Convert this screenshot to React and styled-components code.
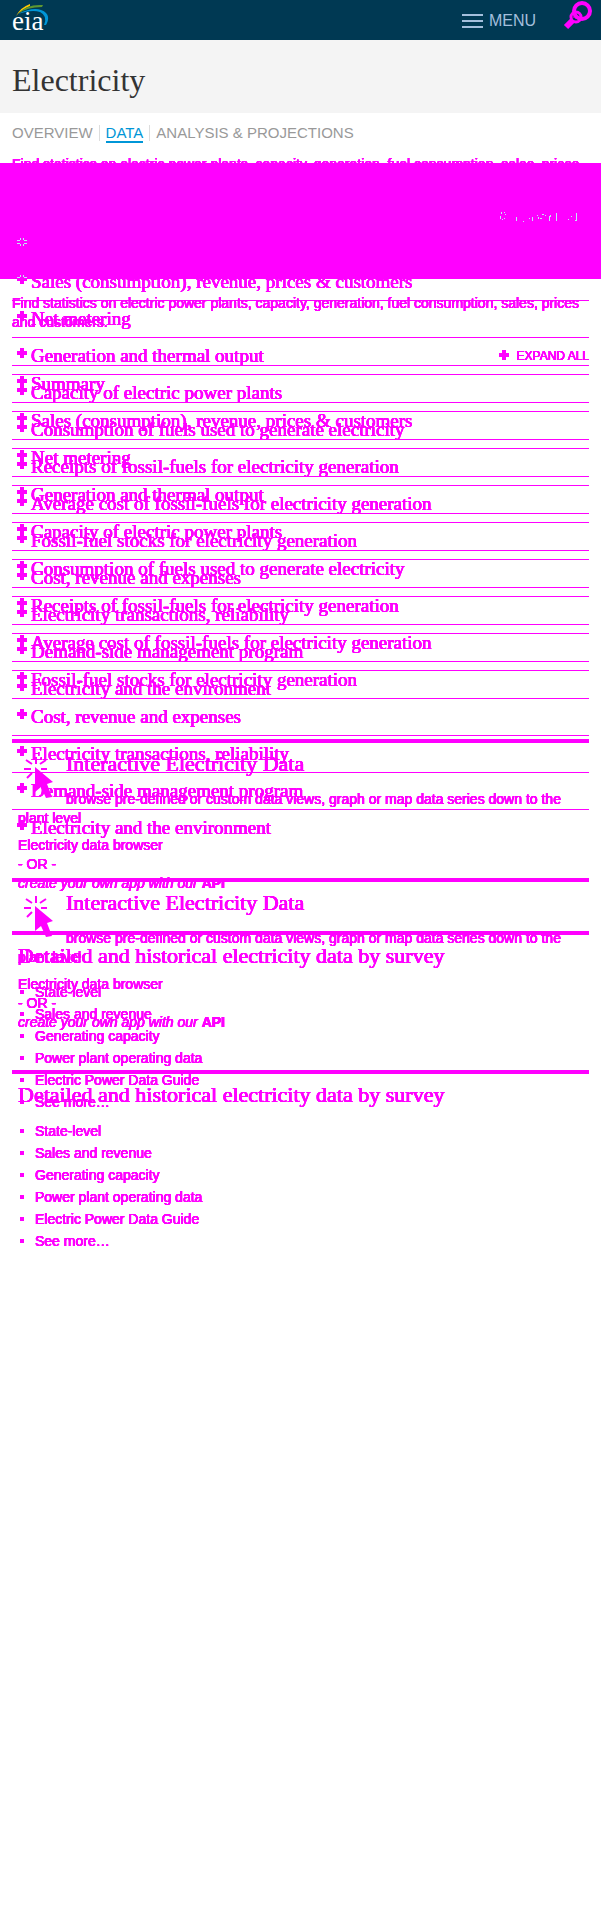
import React from "react";
import styled, { createGlobalStyle } from "styled-components";

const MARK = "#ff00ff";
const SANS = '"Liberation Sans", Arial, sans-serif';
const SERIF = '"Liberation Serif", "Times New Roman", serif';

const GlobalStyle = createGlobalStyle`
  * { box-sizing: border-box; }
  body { margin: 0; background: #fff; font-family: ${SANS}; }
  h1, h2, h3, p, ul { margin: 0; padding: 0; font-weight: normal; }
  button { border: 0; padding: 0; background: none; cursor: pointer; }
  a { color: inherit; text-decoration: none; }
  svg { flex-shrink: 0; }
`;

const TopBar = styled.header`
  display: flex;
  align-items: center;
  justify-content: space-between;
  height: 40px;
  padding: 0 9px 0 12px;
  background: #003953;
`;

const LogoLink = styled.a`
  display: block;
  height: 40px;
`;

const Tools = styled.div`
  display: flex;
  align-items: flex-start;
  gap: 26px;
  height: 40px;
`;

const MenuButton = styled.button`
  display: flex;
  align-items: center;
  gap: 6px;
  height: 41px;
  color: #a4bfdc;
  font: 16px/20px ${SANS};
`;

const SearchButton = styled.button`
  display: block;
  height: 32px;
`;

const TitleBand = styled.div`
  display: flex;
  align-items: center;
  height: 73px;
  padding: 6px 12px 0;
  background: #f4f4f4;
`;

const Title = styled.h1`
  font: 32px/36px ${SERIF};
  color: #333;
`;

const Tabs = styled.nav`
  display: flex;
  align-items: flex-start;
  height: 42px;
  padding: 11px 12px 0;
`;

const Tab = styled.a`
  height: 19px;
  font: 15px/18px ${SANS};
  color: ${(p) => (p.$current ? "#0096d7" : "#999")};
  border-bottom: ${(p) => (p.$current ? "2px solid #0096d7" : "0")};
`;

const TabRule = styled.span`
  width: 1px;
  height: 16px;
  margin: 1px 6px 0;
  background: #ddd;
`;

const Stage = styled.main`
  display: grid;
  grid-template-columns: minmax(0, 1fr);
  align-items: start;
`;

const Pane = styled.div`
  grid-area: 1 / 1;
  padding: ${(p) => p.$drop}px 12px 0;
  color: ${MARK};
  text-shadow: 0 0 0 ${MARK}, 0 0 0 ${MARK}, 0 0 0 ${MARK}, 0 0 0 ${MARK}, 0 0 0 ${MARK},
    0 0 0 ${MARK};
`;

const Band = styled.div`
  grid-area: 1 / 1;
  z-index: 1;
  display: flex;
  flex-direction: column;
  height: 116px;
  margin-top: 8px;
  padding: 48px 22px 0 17px;
  background: ${MARK};
`;

const BandEnd = styled.div`
  display: flex;
  justify-content: flex-end;
  height: 26px;
`;

const BandMarks = styled.div`
  display: flex;
  flex-direction: column;
  gap: 27px;
  height: 42px;
  overflow: hidden;
`;

const Copy = styled.p`
  font: 14px/19px ${SANS};
`;

const ExpandRow = styled.div`
  display: flex;
  justify-content: flex-end;
  padding-top: 14px;
`;

const ExpandButton = styled.button`
  display: flex;
  align-items: flex-start;
  gap: 8px;
  height: 19px;
  color: inherit;
  text-shadow: inherit;
  font: 12px/21px ${SANS};

  svg {
    margin-top: 4px;
  }
`;

const Topics = styled.ul`
  list-style: none;
`;

const Topic = styled.li`
  height: 37px;
  border-top: 1px solid ${MARK};
`;

const TopicButton = styled.button`
  display: flex;
  align-items: flex-start;
  gap: 4px;
  width: 100%;
  padding: 8px 5px;
  color: inherit;
  text-shadow: inherit;
  text-align: left;
  font: 19px/20px ${SERIF};

  svg {
    margin-top: 2px;
  }
`;

const Section = styled.section`
  margin-top: ${(p) => p.$gap}px;
  padding: 8px 6px 0;
  border-top: 4px solid ${MARK};
`;

const Heading = styled.h2`
  margin-bottom: ${(p) => p.$after}px;
  font: 22px/26px ${SERIF};
`;

const CursorSlot = styled.div`
  float: left;
  width: 48px;
  height: 52px;
  padding: 6px 0 0 6px;
`;

const Links = styled.div`
  padding-top: 8px;
`;

const Surveys = styled.ul`
  list-style: none;
`;

const Survey = styled.li`
  display: flex;
  align-items: center;
  gap: 11px;
  padding-left: 2px;
  font: 14px/22px ${SANS};

  &::before {
    content: "";
    width: 4px;
    height: 4px;
    background: ${MARK};
  }
`;

const Plus = () => (
  <svg width="10" height="10" viewBox="0 0 10 10" aria-hidden="true">
    <path d="M3 0h4v3h3v4H7v3H3V7H0V3h3z" fill={MARK} />
  </svg>
);

const PlusTrace = () => (
  <svg width="10" height="10" viewBox="0 0 10 10" shapeRendering="crispEdges" aria-hidden="true">
    <path
      d="M3 1h1v2H3zM6 1h1v2H6zM0 3h3v1H0zM7 3h3v1H7zM0 6h3v1H0zM7 6h3v1H7zM3 7h1v2H3zM6 7h1v2H6z"
      fill="#c5e6f6"
    />
  </svg>
);

const LabelTrace = () => (
  <svg width="79" height="11" viewBox="0 0 79 11" shapeRendering="crispEdges" aria-hidden="true">
    <path
      d="M1 1h1v2H1zM4 1h1v1H4zM0 5h1v3H0zM5 3h1v1H5zM4 7h1v1H4zM2 8h1v1H2zM16 6h1v4h-1zM23 10h1v1h-1zM29 7h1v1h-1zM32 6h1v4h-1zM37 4h1v1h-1zM38 6h1v2h-1zM40 7h2v1h-2zM42 3h2v1h-2zM45 4h1v1h-1zM49 5h1v5h-1zM50 4h1v2h-1zM56 2h1v8h-1zM68 8h1v1h-1zM71 5h1v1h-1zM76 2h1v8h-1zM75 9h1v1h-1z"
      fill="#c5e6f6"
    />
  </svg>
);

const Logo = () => (
  <svg width="38" height="40" viewBox="0 0 38 40" role="img" aria-label="eia">
    <path d="M4 16Q9 7 18 4L18 6Q10 9 4 16z" fill="#ffc702" />
    <path d="M6 14Q14 4 31 5L30 7Q15 7 6 14z" fill="#5d9732" />
    <path d="M6 14Q20 7 29 10C38 13 37 20 34 25H32Q36 16 28 12Q20 9 6 14z" fill="#0096d7" />
    <text x="0" y="30" fontFamily={SERIF} fontSize="27" fill="#fff">
      eia
    </text>
  </svg>
);

const Bars = () => (
  <svg width="21" height="14" viewBox="0 0 21 14" aria-hidden="true">
    <path d="M0 0h21v2H0zM0 6h21v2H0zM0 12h21v2H0z" fill="#a4bfdc" />
  </svg>
);

const SearchIcon = () => (
  <svg width="30" height="32" viewBox="0 0 30 32" aria-hidden="true">
    <g fill="none" stroke={MARK}>
      <circle cx="20" cy="11" r="8" strokeWidth="4" />
      <circle cx="14" cy="17" r="5" strokeWidth="3" />
      <path d="M14 14v5M11 17h6" strokeWidth="1" />
      <path d="M11 20L4 27" strokeWidth="6" />
    </g>
  </svg>
);

const CursorIcon = () => (
  <svg width="30" height="42" viewBox="0 0 30 42" aria-hidden="true">
    <path
      d="M12 0v7M2 3l6 4M22 3l-6 4M0 12h7M17 12h6M3 21l5-5"
      stroke={MARK}
      strokeWidth="2"
      fill="none"
    />
    <path d="M11 10L29 25L23 27L28 40L22 41L17 30L11 35z" fill={MARK} />
  </svg>
);

const topics = [
  "Summary",
  "Sales (consumption), revenue, prices & customers",
  "Net metering",
  "Generation and thermal output",
  "Capacity of electric power plants",
  "Consumption of fuels used to generate electricity",
  "Receipts of fossil-fuels for electricity generation",
  "Average cost of fossil-fuels for electricity generation",
  "Fossil-fuel stocks for electricity generation",
  "Cost, revenue and expenses",
  "Electricity transactions, reliability",
  "Demand-side management program",
  "Electricity and the environment",
];

const surveys = [
  "State-level",
  "Sales and revenue",
  "Generating capacity",
  "Power plant operating data",
  "Electric Power Data Guide",
  "See more…",
];

const DataPane = ({ drop }) => (
  <Pane $drop={drop}>
    <Copy>
      Find statistics on electric power plants, capacity, generation, fuel consumption, sales,
      prices and customers.
    </Copy>
    <ExpandRow>
      <ExpandButton type="button">
        <Plus />
        EXPAND ALL
      </ExpandButton>
    </ExpandRow>
    <Topics>
      {topics.map((topic) => (
        <Topic key={topic}>
          <TopicButton type="button" aria-expanded="false">
            <Plus />
            {topic}
          </TopicButton>
        </Topic>
      ))}
    </Topics>
    <Section $gap={32}>
      <CursorSlot>
        <CursorIcon />
      </CursorSlot>
      <Heading $after={13}>Interactive Electricity Data</Heading>
      <Copy>
        browse pre-defined or custom data views, graph or map data series down to the plant level
      </Copy>
      <Links>
        <Copy>
          <a href="#browser">Electricity data browser</a>
        </Copy>
        <Copy>- OR -</Copy>
        <Copy>
          <em>create your own app with our </em>
          <a href="#api">
            <b>API</b>
          </a>
        </Copy>
      </Links>
    </Section>
    <Section $gap={38}>
      <Heading $after={12}>Detailed and historical electricity data by survey</Heading>
      <Surveys>
        {surveys.map((survey) => (
          <Survey key={survey}>
            <a href="#survey">{survey}</a>
          </Survey>
        ))}
      </Surveys>
    </Section>
  </Pane>
);

export default function App() {
  return (
    <>
      <GlobalStyle />
      <TopBar>
        <LogoLink href="#home">
          <Logo />
        </LogoLink>
        <Tools>
          <MenuButton type="button">
            <Bars />
            MENU
          </MenuButton>
          <SearchButton type="button" aria-label="Search">
            <SearchIcon />
          </SearchButton>
        </Tools>
      </TopBar>
      <TitleBand>
        <Title>Electricity</Title>
      </TitleBand>
      <Tabs>
        <Tab href="#overview">OVERVIEW</Tab>
        <TabRule />
        <Tab href="#data" $current aria-current="page">
          DATA
        </Tab>
        <TabRule />
        <Tab href="#analysis">ANALYSIS &amp; PROJECTIONS</Tab>
      </Tabs>
      <Stage>
        <DataPane drop={0} />
        <DataPane drop={139} />
        <Band aria-hidden="true">
          <BandEnd>
            <LabelTrace />
          </BandEnd>
          <BandMarks>
            <PlusTrace />
            <PlusTrace />
          </BandMarks>
        </Band>
      </Stage>
    </>
  );
}
